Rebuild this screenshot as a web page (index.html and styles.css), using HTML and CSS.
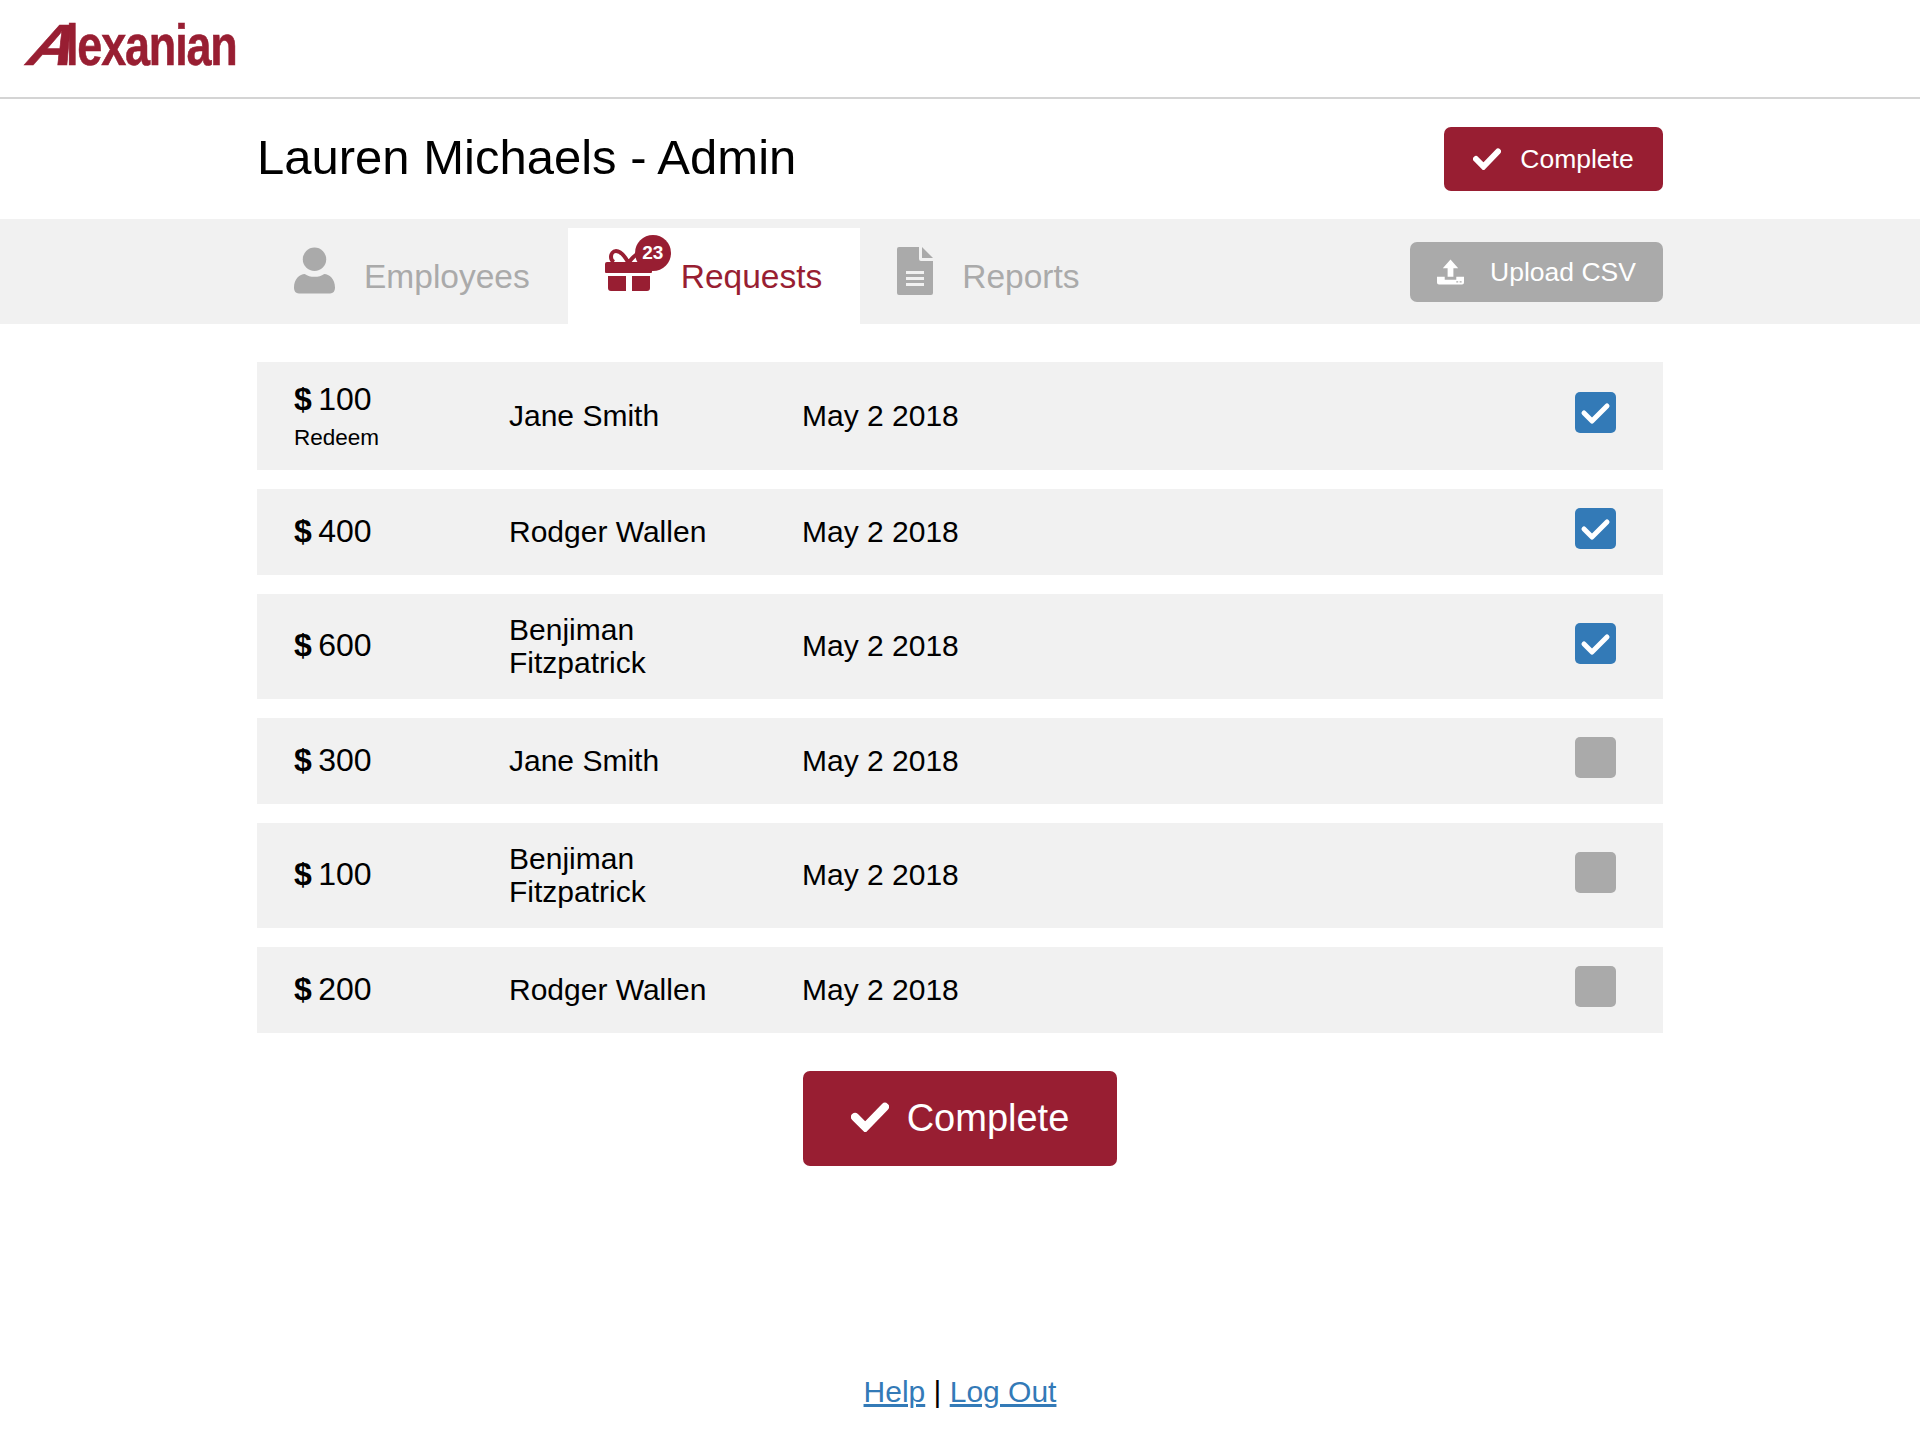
FILE: index.html
```html
<!DOCTYPE html>
<html lang="en">

<head>
    <meta charset="UTF-8">
    <title>Alexanian Admin</title>
    <link rel="stylesheet" href="styles.css">
</head>

<body>

    <header class="site-header">
        <div class="logo"><span class="logo-a">A</span><span class="logo-rest">lexanian</span></div>
    </header>

    <div class="title-row">
        <h1>Lauren Michaels - Admin</h1>
        <button class="btn btn-small">
            <svg class="check-icon" viewBox="0 0 28 22"><path d="M3 11l7.500 7.500L25 3.500" /></svg>
            Complete
        </button>
    </div>

    <nav class="tab-bar">
        <div class="tab">
            <svg class="tab-icon" viewBox="0 0 42 48"><circle cx="21" cy="12" r="12" /><path d="M0 41c0-9 6-14 11-14 3 2 6 3 10 3s7-1 10-3c5 0 11 5 11 14 0 4-2 6-5 6H5c-3 0-5-2-5-6z" /></svg>
            <span>Employees</span>
        </div>
        <div class="tab tab-active">
            <span class="gift-wrap">
                <svg class="gift-icon" viewBox="0 0 47 42">
                    <path d="M2 13h43a2 2 0 0 1 2 2v8a1 1 0 0 1-1 1H1a1 1 0 0 1-1-1v-8a2 2 0 0 1 2-2z" />
                    <path d="M3 27h18v15H6a3 3 0 0 1-3-3zM27 27h18v12a3 3 0 0 1-3 3H27z" />
                    <path class="gift-bow" d="M23 13c-4-7-8-11-12-11-3 0-5 3-5 6 0 2 1 4 3 5M24 13c4-5 8-9 13-11" />
                </svg>
                <span class="badge">23</span>
            </span>
            <span>Requests</span>
        </div>
        <div class="tab">
            <svg class="tab-icon doc-icon" viewBox="0 0 36 48"><path d="M2 0h20v12a2 2 0 0 0 2 2h12v32a2 2 0 0 1-2 2H2a2 2 0 0 1-2-2V2a2 2 0 0 1 2-2zM25 0l11 11H25zM9 24v3h18v-3zM9 30v3h18v-3zM9 36v3h18v-3z" fill-rule="evenodd" /></svg>
            <span>Reports</span>
        </div>
        <button class="btn-upload">
            <svg class="upload-icon" viewBox="0 0 28 26"><path d="M14 0l8 9h-5v9h-6V9H6zM0 18h8v3h12v-3h8v6a2 2 0 0 1-2 2H2a2 2 0 0 1-2-2zM20 22.500v1.500h2v-1.500zM23.500 22.500v1.500h2v-1.500z" fill-rule="evenodd" /></svg>
            Upload CSV
        </button>
    </nav>

    <main class="request-list">
        <div class="request-row row-tall">
            <div class="amount amount-stack"><div><b>$</b> 100</div><div class="amount-note">Redeem</div></div>
            <div class="name">Jane Smith</div>
            <div class="date">May 2 2018</div>
            <div class="checkbox checked"><svg viewBox="0 0 41 41"><path d="M9 21l8 8 15-15" /></svg></div>
        </div>
        <div class="request-row">
            <div class="amount"><b>$</b> 400</div>
            <div class="name">Rodger Wallen</div>
            <div class="date">May 2 2018</div>
            <div class="checkbox checked"><svg viewBox="0 0 41 41"><path d="M9 21l8 8 15-15" /></svg></div>
        </div>
        <div class="request-row">
            <div class="amount"><b>$</b> 600</div>
            <div class="name">Benjiman<br>Fitzpatrick</div>
            <div class="date">May 2 2018</div>
            <div class="checkbox checked"><svg viewBox="0 0 41 41"><path d="M9 21l8 8 15-15" /></svg></div>
        </div>
        <div class="request-row">
            <div class="amount"><b>$</b> 300</div>
            <div class="name">Jane Smith</div>
            <div class="date">May 2 2018</div>
            <div class="checkbox"></div>
        </div>
        <div class="request-row">
            <div class="amount"><b>$</b> 100</div>
            <div class="name">Benjiman<br>Fitzpatrick</div>
            <div class="date">May 2 2018</div>
            <div class="checkbox"></div>
        </div>
        <div class="request-row">
            <div class="amount"><b>$</b> 200</div>
            <div class="name">Rodger Wallen</div>
            <div class="date">May 2 2018</div>
            <div class="checkbox"></div>
        </div>
    </main>

    <div class="bottom-action">
        <button class="btn btn-large">
            <svg class="check-icon" viewBox="0 0 28 22"><path d="M3 11l7.500 7.500L25 3.500" /></svg>
            Complete
        </button>
    </div>

    <footer class="site-footer">
        <a href="#">Help</a> | <a href="#">Log Out</a>
    </footer>

</body>

</html>
```

FILE: styles.css
```css
body {
    margin: 0;
    font-family: "Liberation Sans", Arial, sans-serif;
    color: #000;
    background-color: #fff;
}

.site-header {
    height: 81px;
    border-bottom: 2px solid #d4d4d4;
    padding: 16px 0 0 18px;
}

.logo {
    color: #981e32;
    font-size: 58px;
    font-weight: 700;
    line-height: 1;
    display: flex;
    white-space: nowrap;
    -webkit-text-stroke: 0.6px #981e32;
}

.logo-a {
    width: 42px;
    margin-right: 6px;
    transform-origin: left bottom;
    transform: skewX(-26deg) scaleX(1.1);
}

.logo-rest {
    letter-spacing: -1.500px;
    transform-origin: left bottom;
    transform: scaleX(0.775);
}

.title-row {
    display: flex;
    justify-content: space-between;
    align-items: center;
    padding: 28px 257px;
}

h1 {
    margin: 0 0 4px 0;
    font-size: 49px;
    font-weight: 400;
    line-height: 60px;
}

.btn {
    display: flex;
    align-items: center;
    justify-content: center;
    color: #fff;
    background-color: #981e32;
    border: none;
    border-radius: 7px;
    font-family: inherit;
}

.btn-small {
    width: 219px;
    height: 64px;
    font-size: 26.500px;
    gap: 19px;
}

.btn-small .check-icon {
    width: 28px;
    height: 22px;
}

.btn-large {
    width: 314px;
    height: 95px;
    font-size: 38px;
    gap: 18px;
}

.btn-large .check-icon {
    width: 38px;
    height: 30px;
    margin-bottom: 4px;
}

.check-icon {
    fill: none;
    stroke: #fff;
    stroke-width: 6;
    stroke-linecap: round;
    stroke-linejoin: miter;
}

.tab-bar {
    height: 105px;
    background-color: #f1f1f1;
    padding: 9px 257px 0 257px;
    box-sizing: border-box;
    display: flex;
    align-items: stretch;
}

.tab {
    display: flex;
    align-items: center;
    gap: 29px;
    padding: 0 38px 0 37px;
    font-size: 33.500px;
    color: #aaa;
}

.tab > span:last-child {
    margin-top: 2px;
}

.tab-icon {
    display: block;
    width: 41px;
    height: 48px;
    fill: #aaa;
    margin-bottom: 11px;
}

.doc-icon {
    width: 36px;
}

.tab-active {
    background-color: #fff;
    color: #981e32;
}

.gift-wrap {
    position: relative;
    display: block;
    margin-bottom: 12px;
}

.gift-icon {
    display: block;
    width: 47px;
    height: 42px;
    fill: #981e32;
}

.gift-bow {
    fill: none;
    stroke: #981e32;
    stroke-width: 4;
}

.badge {
    position: absolute;
    top: -14px;
    left: 30px;
    width: 36px;
    height: 36px;
    border-radius: 50%;
    background-color: #981e32;
    color: #fff;
    font-size: 19px;
    font-weight: 700;
    line-height: 35px;
    text-align: center;
}

.btn-upload {
    margin-left: auto;
    margin-top: 14px;
    width: 253px;
    height: 60px;
    display: flex;
    align-items: center;
    justify-content: center;
    gap: 26px;
    color: #fff;
    background-color: #aaa;
    border: none;
    border-radius: 7px;
    font-family: inherit;
    font-size: 26.500px;
}

.upload-icon {
    width: 27px;
    height: 26px;
    fill: #fff;
}

.request-list {
    padding: 38px 257px 0 257px;
    display: flex;
    flex-direction: column;
    gap: 19px;
}

.request-row {
    display: flex;
    align-items: center;
    box-sizing: border-box;
    min-height: 86px;
    background-color: #f1f1f1;
    padding: 18.500px 47px 20.500px 37px;
    font-size: 30px;
    line-height: 33px;
}

.row-tall {
    min-height: 108px;
    padding-top: 16px;
    padding-bottom: 18px;
}

.amount {
    width: 215px;
    flex-shrink: 0;
    font-size: 32px;
    word-spacing: -2.500px;
}

.amount-stack {
    margin-top: 4px;
}

.amount-note {
    font-size: 22.500px;
    line-height: 28px;
    margin-top: 8px;
    word-spacing: normal;
}

.name {
    width: 294px;
    flex-shrink: 0;
}

.date {
    flex-grow: 1;
    margin-left: -1px;
}

.checkbox {
    width: 41px;
    height: 41px;
    border-radius: 5px;
    background-color: #aaa;
    margin-bottom: 5px;
}

.checkbox.checked {
    background-color: #337ab7;
}

.checkbox svg {
    display: block;
    fill: none;
    stroke: #fff;
    stroke-width: 5;
    stroke-linecap: round;
    stroke-linejoin: round;
}

.bottom-action {
    display: flex;
    justify-content: center;
    margin-top: 38px;
}

.site-footer {
    margin-top: 208px;
    text-align: center;
    font-size: 30px;
    line-height: 36px;
}

.site-footer a {
    color: #337ab7;
}
```
